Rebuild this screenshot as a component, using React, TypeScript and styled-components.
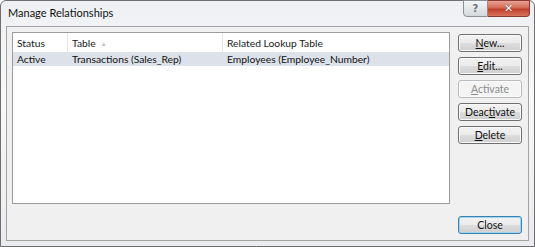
import styled, { createGlobalStyle } from 'styled-components';

const GlobalStyle = createGlobalStyle`
  html, body {
    margin: 0;
    padding: 0;
    background: #ffffff;
  }
  body {
    font-family: Lato, 'Noto Sans', sans-serif;
    font-size: 10.3px;
    color: #1e1e1e;
  }
`;

const Window = styled.div`
  width: 535px;
  height: 247px;
  box-sizing: border-box;
  display: flex;
  flex-direction: column;
  border: 1px solid #6f6f6f;
  border-radius: 6px 6px 0 0;
  background: linear-gradient(180deg, #eef0f3 0%, #f7f8f9 40%, #e9ebee 100%);
  padding: 0 5px 5px 5px;
`;

const TitleBar = styled.div`
  height: 25px;
  display: flex;
  align-items: flex-start;
  justify-content: space-between;
`;

const Title = styled.span`
  font-size: 11px;
  padding: 5px 0 0 2px;
  color: #111;
`;

const CaptionButtons = styled.div`
  display: flex;
  margin-right: -1px;
  margin-top: -1px;
`;

const CaptionButton = styled.div<{ $danger?: boolean }>`
  height: 17px;
  width: ${(p) => (p.$danger ? '42px' : '25px')};
  box-sizing: border-box;
  display: flex;
  align-items: center;
  justify-content: center;
  border: 1px solid ${(p) => (p.$danger ? '#8a3a30' : '#8d9196')};
  border-left: ${(p) => (p.$danger ? 'none' : undefined)};
  border-radius: ${(p) => (p.$danger ? '0 0 4px 0' : '0 0 0 4px')};
  background: ${(p) =>
    p.$danger
      ? 'linear-gradient(180deg, #e8a393 0%, #d36a55 45%, #c2402b 55%, #d8735c 100%)'
      : 'linear-gradient(180deg, #f4f5f6 0%, #e4e6e8 50%, #d5d8db 100%)'};
  color: ${(p) => (p.$danger ? '#ffffff' : '#6c7278')};
  font-family: 'DejaVu Sans', sans-serif;
  font-size: ${(p) => (p.$danger ? '11px' : '10px')};
  font-weight: bold;
  text-shadow: ${(p) => (p.$danger ? '0 0 1px #7a2418' : 'none')};
`;

const Client = styled.div`
  flex: 1;
  display: flex;
  flex-direction: column;
  background: #f0f0f0;
  border: 1px solid #a3a3a3;
  padding: 5px 6px 6px 5px;
`;

const Body = styled.div`
  display: flex;
  gap: 8px;
  height: 172px;
`;

const ListBox = styled.div`
  flex: 1;
  background: #ffffff;
  border: 1px solid #9c9c9c;
  display: flex;
  flex-direction: column;
`;

const Row = styled.div<{ $header?: boolean; $selected?: boolean }>`
  display: grid;
  grid-template-columns: 55px 155px 1fr;
  height: ${(p) => (p.$header ? '19px' : '14px')};
  align-items: center;
  background: ${(p) => (p.$selected ? '#dde2ea' : 'transparent')};
`;

const Cell = styled.div<{ $header?: boolean; $last?: boolean }>`
  padding-left: 4px;
  white-space: nowrap;
  height: 100%;
  display: flex;
  align-items: center;
  box-sizing: border-box;
  border-right: ${(p) => (p.$header && !p.$last ? '1px solid #e5e5e5' : 'none')};
  color: ${(p) => (p.$header ? '#1a1a1a' : '#111')};
  padding-top: ${(p) => (p.$header ? '1px' : '0')};
`;

const SortArrow = styled.span`
  margin-left: 5px;
  color: #b8bcc2;
  font-size: 6px;
`;

const ButtonColumn = styled.div`
  width: 64px;
  display: flex;
  flex-direction: column;
  gap: 5px;
  padding-top: 2px;
`;

const Button = styled.button<{ $disabled?: boolean; $default?: boolean }>`
  width: 64px;
  height: 18px;
  padding: 0;
  font-family: inherit;
  font-size: 10.5px;
  line-height: 1;
  border-radius: 3px;
  border: 1px solid ${(p) => (p.$default ? '#3c7fb1' : p.$disabled ? '#b9bcbf' : '#707070')};
  box-shadow: ${(p) => (p.$default ? 'inset 0 0 0 1px #9ed6f0' : 'inset 0 0 0 1px #fbfbfb')};
  background: ${(p) =>
    p.$disabled
      ? '#f4f4f4'
      : 'linear-gradient(180deg, #f2f2f2 0%, #ebebeb 48%, #dddddd 52%, #cfcfcf 100%)'};
  color: ${(p) => (p.$disabled ? '#8c8c8c' : '#111')};
  u {
    text-decoration-thickness: 1px;
    text-underline-offset: 1px;
  }
`;

const Footer = styled.div`
  display: flex;
  justify-content: flex-end;
  margin-top: auto;
`;

export default function App() {
  return (
    <>
      <GlobalStyle />
      <Window>
        <TitleBar>
          <Title>Manage Relationships</Title>
          <CaptionButtons>
            <CaptionButton>?</CaptionButton>
            <CaptionButton $danger>✕</CaptionButton>
          </CaptionButtons>
        </TitleBar>
        <Client>
          <Body>
            <ListBox>
              <Row $header>
                <Cell $header>Status</Cell>
                <Cell $header>
                  Table<SortArrow>▲</SortArrow>
                </Cell>
                <Cell $header $last>
                  Related Lookup Table
                </Cell>
              </Row>
              <Row $selected>
                <Cell>Active</Cell>
                <Cell>Transactions (Sales_Rep)</Cell>
                <Cell>Employees (Employee_Number)</Cell>
              </Row>
            </ListBox>
            <ButtonColumn>
              <Button>
                <u>N</u>ew...
              </Button>
              <Button>
                <u>E</u>dit...
              </Button>
              <Button $disabled>
                <u>A</u>ctivate
              </Button>
              <Button>
                Deac<u>t</u>ivate
              </Button>
              <Button>
                <u>D</u>elete
              </Button>
            </ButtonColumn>
          </Body>
          <Footer>
            <Button $default>Close</Button>
          </Footer>
        </Client>
      </Window>
    </>
  );
}
